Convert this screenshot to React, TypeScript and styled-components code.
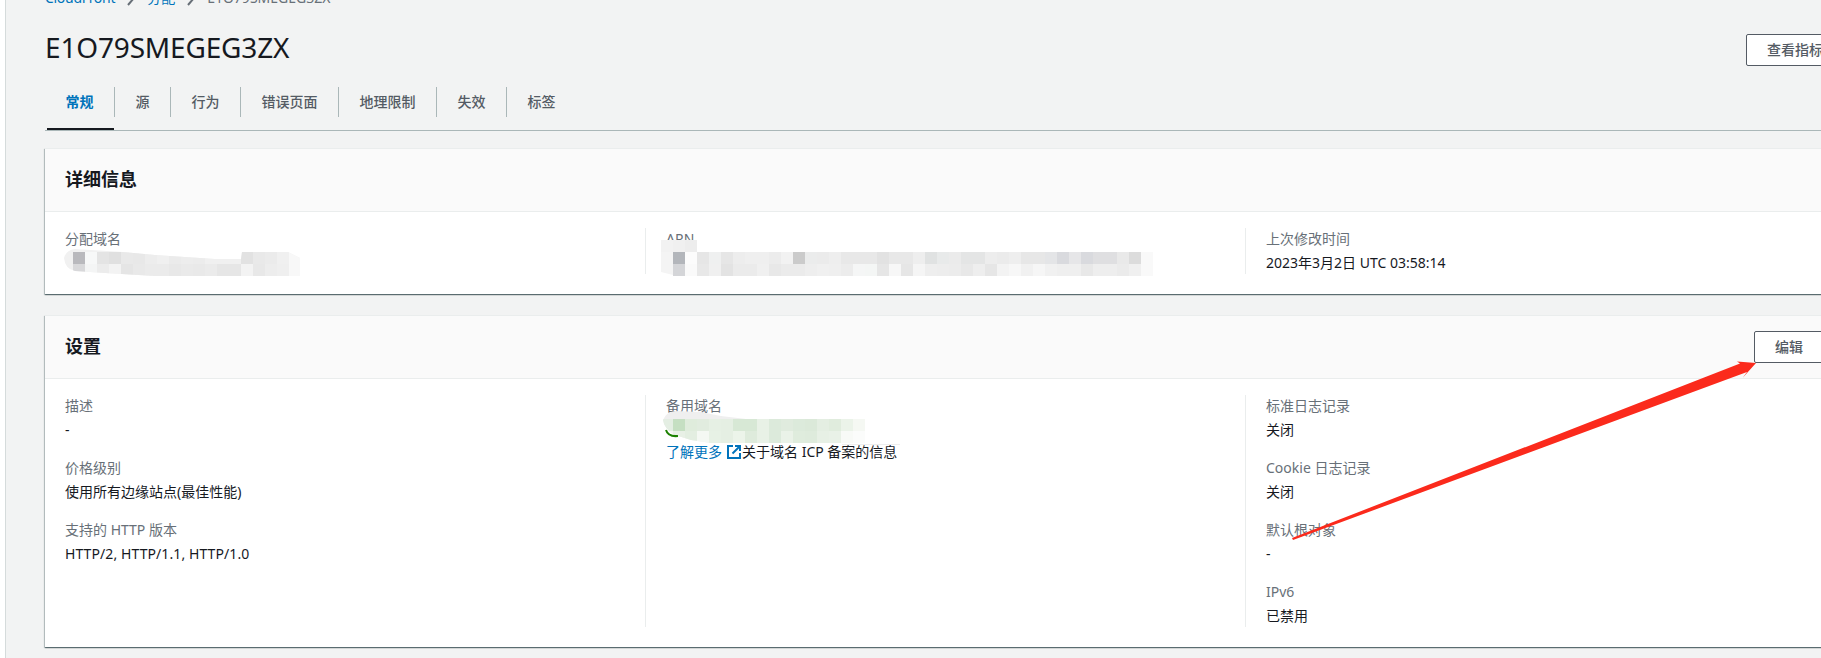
import React from "react";
import styled, { createGlobalStyle } from "styled-components";

const GlobalStyle = createGlobalStyle`
  html, body { margin: 0; padding: 0; background: #f2f3f3; }
  body {
    font-family: "Noto Sans", "Noto Sans CJK SC", "Liberation Sans", sans-serif;
    font-size: 14px;
    color: #16191f;
  }
`;

const Page = styled.div`
  position: relative;
  display: flex;
  width: 1821px;
  height: 658px;
  overflow: hidden;
  background: #f2f3f3;
`;

const NavStrip = styled.div`
  flex: 0 0 5px;
  background: #ffffff;
  border-right: 1px solid #d5dbdb;
`;

const Main = styled.main`
  flex: 0 0 1838px;
  padding-left: 39px;
  box-sizing: border-box;
`;

const Breadcrumbs = styled.nav`
  display: flex;
  align-items: center;
  gap: 8px;
  height: 20px;
  margin: -12px 0 22px;
  line-height: 20px;
`;

const Crumb = styled.a<{ $tight?: boolean }>`
  color: #0073bb;
  letter-spacing: ${(p) => (p.$tight ? "-0.3px" : "0")};
`;

const Current = styled.span`
  color: #687078;
`;

const TitleRow = styled.div`
  display: flex;
  justify-content: space-between;
  align-items: flex-start;
  height: 57px;
`;

const Title = styled.h1`
  margin: 0;
  font-size: 28px;
  line-height: 34px;
  font-weight: 400;
  letter-spacing: -0.17px;
  color: #16191f;
`;

const Button = styled.button<{ $top?: number }>`
  height: 32px;
  margin-top: ${(p) => p.$top ?? 0}px;
  padding: 0 20px;
  box-sizing: border-box;
  background: #ffffff;
  border: 1px solid #545b64;
  border-radius: 2px;
  color: #545b64;
  font: 500 14px/20px "Noto Sans", "Noto Sans CJK SC", sans-serif;
  white-space: nowrap;
`;

const TabBar = styled.div`
  display: flex;
  height: 43px;
  border-bottom: 1px solid #aab7b8;
`;

const Tab = styled.div<{ $active?: boolean }>`
  position: relative;
  height: 30px;
  padding: 0 20.5px;
  line-height: 30px;
  font-weight: ${(p) => (p.$active ? 700 : 500)};
  color: ${(p) => (p.$active ? "#0073bb" : "#545b64")};
  border-right: 1px solid #aab7b8;
  &:last-child { border-right: 0; }
  ${(p) =>
    p.$active
      ? `&::after {
          content: "";
          position: absolute;
          left: 2px;
          right: 0;
          top: 41px;
          height: 2px;
          background: #16191f;
        }`
      : ""}
`;

const Card = styled.section<{ $top: number }>`
  margin-top: ${(p) => p.$top}px;
  background: #ffffff;
  box-shadow: 0 1px 1px 0 rgba(0, 28, 36, 0.45), 1px 1px 1px 0 rgba(0, 28, 36, 0.15),
    -1px 1px 1px 0 rgba(0, 28, 36, 0.2);
  border-top: 1px solid #eaeded;
`;

const CardHeader = styled.header`
  display: flex;
  justify-content: space-between;
  align-items: center;
  height: 62px;
  padding: 0 20px;
  background: #fafafa;
  border-bottom: 1px solid #eaeded;
`;

const CardTitle = styled.h2`
  margin: 0 0 3px;
  font-size: 18px;
  line-height: 22px;
  font-weight: 700;
  color: #16191f;
`;

const CardBody = styled.div`
  display: grid;
  grid-template-columns: 580px 600px 1fr;
  padding: 16px 0 20px 20px;
`;

const Column = styled.div`
  position: relative;
  display: flex;
  flex-direction: column;
  gap: 16px;
  & + & {
    padding-left: 20px;
    border-left: 1px solid #eaeded;
  }
`;

const Field = styled.div``;

const Label = styled.div`
  line-height: 22px;
  margin-bottom: 2px;
  color: #687078;
`;

const Value = styled.div<{ $spacing?: number }>`
  min-height: 22px;
  line-height: 22px;
  letter-spacing: ${(p) => p.$spacing ?? 0}px;
  color: #16191f;
`;

const InfoLine = styled.div`
  display: flex;
  align-items: center;
  line-height: 22px;
  color: #16191f;
`;

const InfoLink = styled.a`
  color: #0073bb;
  margin-right: 5px;
`;

const Censor = styled.svg<{ $left: number; $top: number }>`
  position: absolute;
  left: ${(p) => p.$left}px;
  top: ${(p) => p.$top}px;
`;

const ArrowOverlay = styled.svg`
  position: absolute;
  left: 0;
  top: 0;
  pointer-events: none;
`;

const Chevron = () => (
  <svg width="16" height="16" viewBox="0 0 16 16" fill="none">
    <path d="M5 15 11 8 5 1" stroke="#687078" strokeWidth="2" />
  </svg>
);

const ExternalIcon = () => (
  <svg width="14" height="14" viewBox="0 0 14 14" fill="none" style={{ marginRight: 1 }}>
    <path d="M6 1H1v12h12V8" stroke="#0073bb" strokeWidth="2" />
    <path d="M5.5 8.5 12 2" stroke="#0073bb" strokeWidth="2" />
    <path d="M8 1h5v5" stroke="#0073bb" strokeWidth="2" />
  </svg>
);

const Cells = ({ rows, x0, y0 }: { rows: string[][]; x0: number; y0: number }) => (
  <>
    {rows.map((row, r) =>
      row.map((c, i) => (
        <rect key={`${r}-${i}`} x={x0 + i * 12} y={y0 + r * 12} width="12" height="12" fill={c} />
      ))
    )}
  </>
);

const g = (s: string) => s.split(" ").map((v) => `#${v}`);

const blobDomain = [
  g("b9b9bd f7f8f8 e4e4e4 e0e0e0 e9e9e9 e8e8e8 ededed f0f0f0 ebebeb ededed ececec f0f0f0 f0f0f0 f0f0f0 e2e2e2 e9e9e9 ebebeb f0f0f0 f8f8f8"),
  g("d8d8da f4f5f5 ececec f3f3f3 e5e5e5 e9e9e9 ebebeb ebebeb e8e8e8 eaeaea e9e9e9 ebebeb e6e6e6 e6e6e6 f3f3f3 e8e8e8 ededed efefef f8f8f8"),
];

const blobArn = [
  g("b3b6bb fcfcfc e6e6e6 eff0f0 e6e6e6 ededed efefef efefef ececec f2f2f2 cbcbcb ebecec ebebeb eeeeee e8e8e8 e8e8e8 e8e8e8 e2e2e2 e8e8e8 e8e8e8 eeeeee e0e2e2 e8eaea ebebeb e4e5e5 e4e5e5 ededed ebebeb eeeeee e7e7e7 e7e7e7 e4e5e7 d9dade e6e6e8 d9dade dfdfe1 dfdfe1 e9e9e9 dcdcdc f9f9f9"),
  g("d4d5d8 fafafa e8e8e8 f0f0f0 e3e3e3 ebebeb ebebeb f0f0f0 e8e8e8 ebebeb ebebeb eeeeee f0f0f0 efefef ececec f5f6f6 f4f6f5 e6e6e6 f7f7f7 e6e6e6 f5f5f5 eeeeee ededed ececec e8e8e8 eeeeee e6e6e6 f3f3f3 f7f7f7 f1f1f1 f6f6f6 f1f1f1 efefef efefef e8e8e8 eeeeee eeeeee ebebeb f0f0f0 f9f9f9"),
];

const blobAlt = [
  g("e4eee3 c5dfc2 dfecdc e1ecdf e6f0e4 e5efe3 d7e8d5 d7e8d5 e8f1e6 dceadb e0ebde dceadb dbe9d9 e4eee2 e0ecdd ebf3e9 f5f8f3"),
  g("f5f7f5 e8f0e6 e3eee1 f4f8f3 e7f1e5 e5efe3 ecf4ea deebdc e8f1e6 dceadb eaf2e8 dfecdd deebdc e7f0e5 e9f1e7 f8faf7 fbfcfb"),
];

export default function App() {
  return (
    <Page>
      <GlobalStyle />
      <NavStrip />
      <Main>
        <Breadcrumbs>
          <Crumb $tight>CloudFront</Crumb>
          <Chevron />
          <Crumb>分配</Crumb>
          <Chevron />
          <Current>E1O79SMEGEG3ZX</Current>
        </Breadcrumbs>
        <TitleRow>
          <Title>E1O79SMEGEG3ZX</Title>
          <Button $top={4}>查看指标</Button>
        </TitleRow>
        <TabBar>
          <Tab $active>常规</Tab>
          <Tab>源</Tab>
          <Tab>行为</Tab>
          <Tab>错误页面</Tab>
          <Tab>地理限制</Tab>
          <Tab>失效</Tab>
          <Tab>标签</Tab>
        </TabBar>
        <Card $top={17}>
          <CardHeader>
            <CardTitle>详细信息</CardTitle>
          </CardHeader>
          <CardBody>
            <Column>
              <Field>
                <Label>分配域名</Label>
                <Value />
              </Field>
              <Censor $left={-2} $top={20} width="240" height="30" viewBox="0 0 240 30">
                <clipPath id="clip-domain">
                  <path d="M1 10Q3 2 12 1L60 4 92 7 152 11 178 11 179 4 225 4 237 10V28H92L42 25 12 23Q2 21 1 10Z" />
                </clipPath>
                <g clipPath="url(#clip-domain)">
                  <rect width="240" height="30" fill="#f1f1f1" />
                  <Cells rows={blobDomain} x0={10} y0={4} />
                </g>
              </Censor>
            </Column>
            <Column>
              <Field>
                <Label>ARN</Label>
                <Value />
              </Field>
              <Censor $left={15} $top={10} width="494" height="38" viewBox="0 0 494 38">
                <rect x="0" y="2" width="36" height="12" fill="#f2f2f2" />
                <rect x="12" y="2" width="12" height="12" fill="#f0f0f0" />
                <rect x="24" y="2" width="12" height="12" fill="#ededed" />
                <path d="M0 14H12V37L0 34Z" fill="#f4f4f4" />
                <Cells rows={blobArn} x0={12} y0={14} />
              </Censor>
            </Column>
            <Column>
              <Field>
                <Label>上次修改时间</Label>
                <Value>2023年3月2日 UTC 03:58:14</Value>
              </Field>
            </Column>
          </CardBody>
        </Card>
        <Card $top={21}>
          <CardHeader>
            <CardTitle>设置</CardTitle>
            <Button>编辑</Button>
          </CardHeader>
          <CardBody>
            <Column>
              <Field>
                <Label>描述</Label>
                <Value>-</Value>
              </Field>
              <Field>
                <Label>价格级别</Label>
                <Value>使用所有边缘站点(最佳性能)</Value>
              </Field>
              <Field>
                <Label>支持的 HTTP 版本</Label>
                <Value $spacing={0.09}>HTTP/2, HTTP/1.1, HTTP/1.0</Value>
              </Field>
            </Column>
            <Column>
              <Field>
                <Label>备用域名</Label>
                <Value />
                <InfoLine>
                  <InfoLink>了解更多</InfoLink>
                  <ExternalIcon />
                  关于域名 ICP 备案的信息
                </InfoLine>
              </Field>
              <Censor $left={15} $top={12} width="260" height="40" viewBox="0 0 260 40">
                <clipPath id="clip-alt">
                  <path d="M2 13Q5 5 14 4L40 5 60 9 85 12H204V36H50L30 33 14 28Q3 22 2 13Z" />
                </clipPath>
                <g clipPath="url(#clip-alt)">
                  <rect width="260" height="40" fill="#efefef" />
                  <Cells rows={blobAlt} x0={0} y0={12} />
                </g>
                <path d="M5 23Q7 30 17 29" fill="none" stroke="#1d8102" strokeWidth="2" />
                <rect x="181" y="37" width="58" height="1" fill="#eeeeee" />
              </Censor>
            </Column>
            <Column>
              <Field>
                <Label>标准日志记录</Label>
                <Value>关闭</Value>
              </Field>
              <Field>
                <Label>Cookie 日志记录</Label>
                <Value>关闭</Value>
              </Field>
              <Field>
                <Label>默认根对象</Label>
                <Value>-</Value>
              </Field>
              <Field>
                <Label>IPv6</Label>
                <Value>已禁用</Value>
              </Field>
            </Column>
          </CardBody>
        </Card>
      </Main>
      <ArrowOverlay width="1821" height="658" viewBox="0 0 1821 658">
        <path d="M1292 538 1740 363.5 1737 361.5 1756 363 1742.5 378 1747 372 1293 540Z" fill="#fb2a1c" />
      </ArrowOverlay>
    </Page>
  );
}
